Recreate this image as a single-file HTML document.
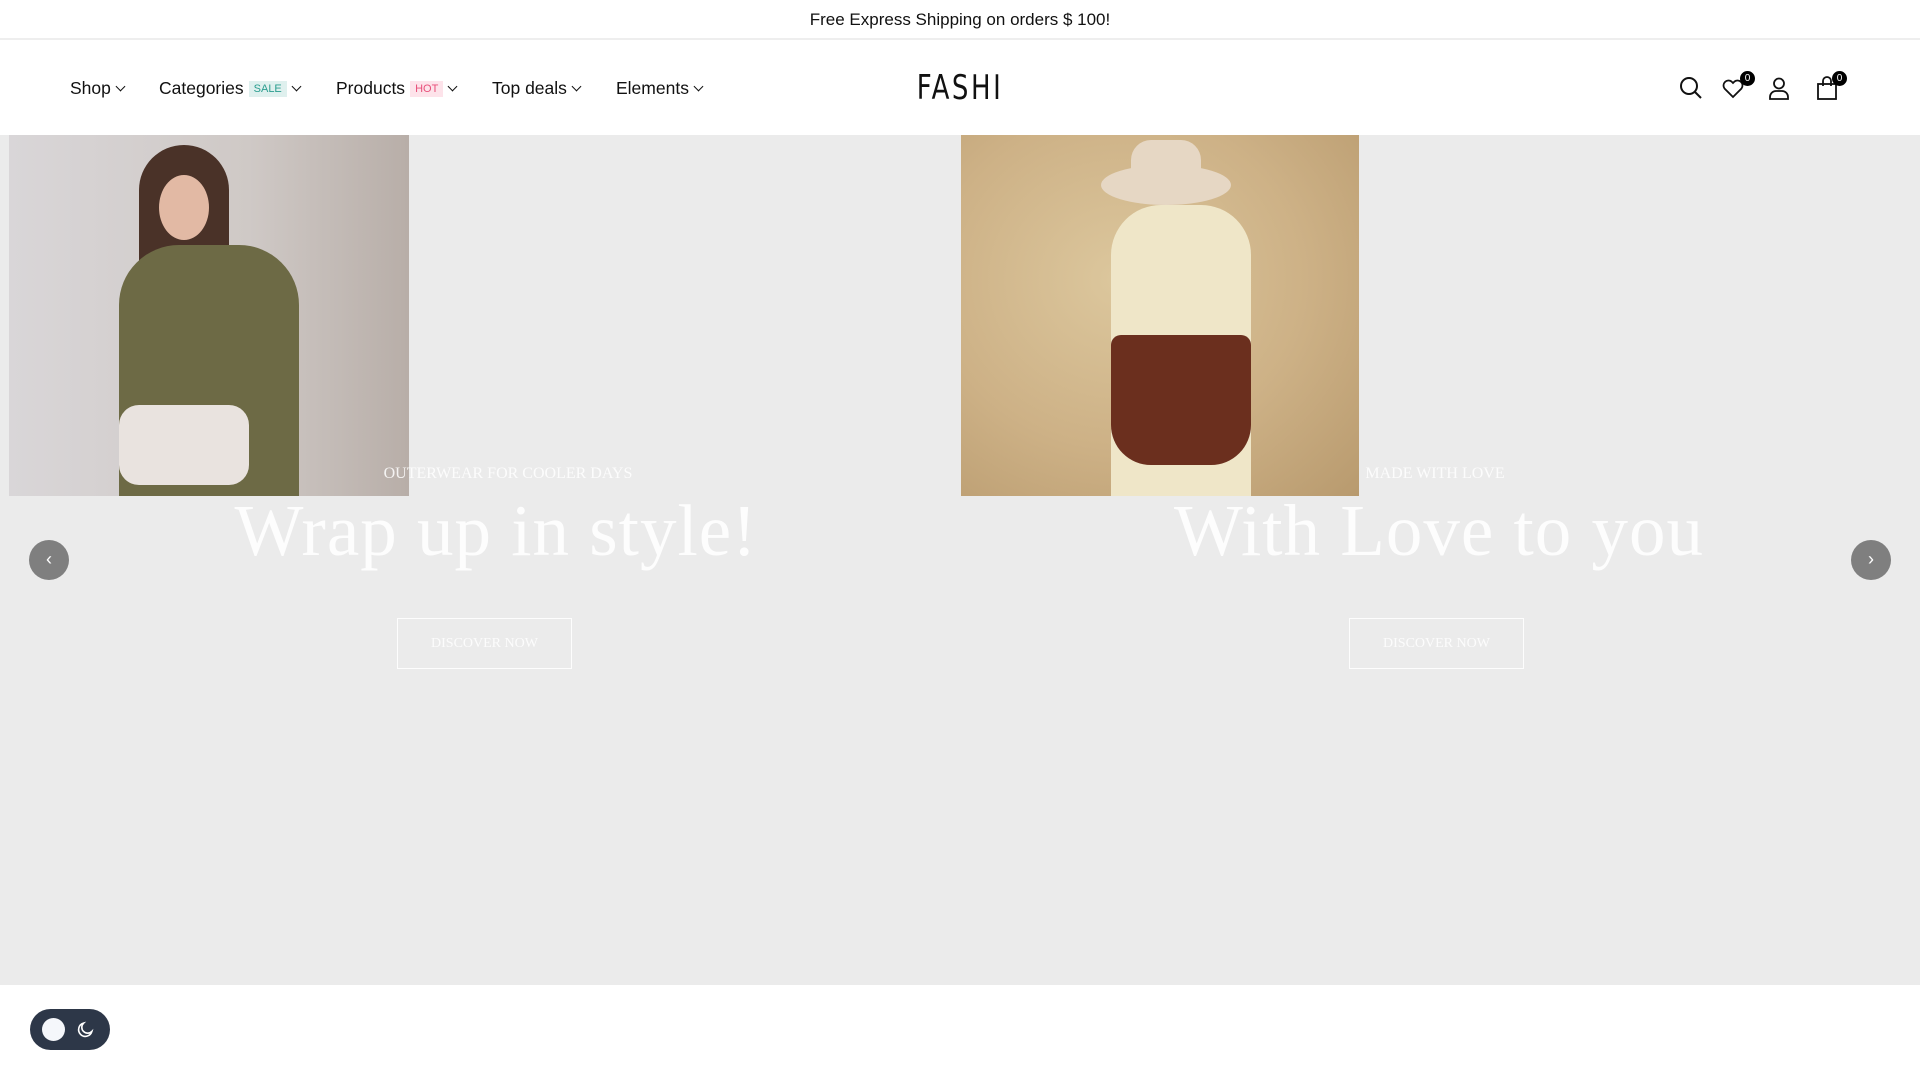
<!DOCTYPE html>
<html><head><meta charset="utf-8"><style>
*{margin:0;padding:0;box-sizing:border-box}
body{width:1920px;height:1080px;overflow:hidden;background:#fff;font-family:"Liberation Sans",sans-serif;position:relative}
.top{height:40px;border-bottom:2px solid #eee;text-align:center;font-size:17px;line-height:40px;color:#111}
.hdr{height:95px;position:relative}
.nav{position:absolute;top:0;left:0;height:95px;font-size:17.5px;color:#111}
.nav span.i{position:absolute;top:38px;white-space:nowrap}
.chev{display:inline-block;width:7px;height:7px;border-right:1.5px solid #111;border-bottom:1.5px solid #111;transform:rotate(45deg);margin-left:6px;position:relative;top:-4px}
.tag{font-size:11px;padding:2px 5px;margin-left:5px;position:relative;top:-2px}
.logo{position:absolute;left:0;width:1920px;text-align:center;top:28px;font-family:"Liberation Sans Narrow","DejaVu Sans Condensed",sans-serif;font-size:34px;letter-spacing:3px;color:#111;transform:scaleX(.85)}
.ic{position:absolute}
.badge{position:absolute;width:15px;height:15px;border-radius:50%;background:#000;color:#fff;font-size:10px;text-align:center;line-height:15px}
.hero{position:absolute;top:135px;left:0;width:1920px;height:850px;background:#ebebeb;overflow:hidden}
.img1{position:absolute;left:9px;top:0;width:400px;height:361px;overflow:hidden;background:linear-gradient(90deg,#d9d6d8 0%,#cfc9c6 60%,#b8aea8 100%)}
.img2{position:absolute;left:961px;top:0;width:398px;height:361px;overflow:hidden;background:radial-gradient(ellipse at 40% 40%,#dcc79d 0%,#cdb186 55%,#b89a6e 100%)}
.sub{position:absolute;font-family:"Liberation Serif",serif;color:rgba(255,255,255,.85);font-size:16px;transform:translateX(-50%);white-space:nowrap}
.h{position:absolute;font-family:"Liberation Serif",serif;color:rgba(255,255,255,.9);font-size:73px;transform:translateX(-50%);white-space:nowrap;letter-spacing:1px}
.btn{position:absolute;border:1.5px solid rgba(255,255,255,.9);width:175px;height:51px;color:rgba(255,255,255,.85);font-family:"Liberation Serif",serif;font-size:14px;text-align:center;line-height:49px}
.arr{position:absolute;top:540px;width:40px;height:40px;border-radius:50%;background:#7f7f7f;color:#fff;text-align:center;line-height:38px;font-size:18px}
.tog{position:absolute;left:30px;top:1009px;width:80px;height:41px;border-radius:21px;background:#2d3748}
</style></head><body>
<div class="top">Free Express Shipping on orders $ 100!</div>
<div class="hdr">
<div class="nav">
<span class="i" style="left:70px">Shop<i class="chev"></i></span>
<span class="i" style="left:159px">Categories<span class="tag" style="background:#dff0ee;color:#2a9d8f">SALE</span><i class="chev"></i></span>
<span class="i" style="left:336px">Products<span class="tag" style="background:#fde3ea;color:#e84f7a">HOT</span><i class="chev"></i></span>
<span class="i" style="left:492px">Top deals<i class="chev"></i></span>
<span class="i" style="left:616px">Elements<i class="chev"></i></span>
</div>
<div class="logo">FASHI</div>
<svg class="ic" style="left:1679px;top:36px" width="24" height="24" viewBox="0 0 24 24" fill="none" stroke="#111" stroke-width="2"><circle cx="10" cy="10" r="8"/><path d="M16 16l6 6"/></svg>
<svg class="ic" style="left:1721px;top:36px" width="24" height="24" viewBox="0 0 24 24" fill="none" stroke="#111" stroke-width="1.8"><path d="M12 21l-8.5-8.5a5 5 0 017-7L12 7l1.5-1.5a5 5 0 017 7z"/></svg>
<div class="badge" style="left:1740px;top:31px">0</div>
<svg class="ic" style="left:1767px;top:36px" width="24" height="24" viewBox="0 0 24 24" fill="none" stroke="#111" stroke-width="1.8"><circle cx="12" cy="7.5" r="5"/><path d="M3 23v-2a6 6 0 016-6h6a6 6 0 016 6v2z"/></svg>
<svg class="ic" style="left:1816px;top:36px" width="22" height="24" viewBox="0 0 22 24" fill="none" stroke="#111" stroke-width="1.8"><rect x="2" y="8" width="18" height="15"/><path d="M7 10V5a4 4 0 018 0v5"/></svg>
<div class="badge" style="left:1832px;top:31px">0</div>
</div>
<div class="hero">
<div class="img1">
<div style="position:absolute;left:130px;top:10px;width:90px;height:140px;border-radius:45px 45px 20px 20px;background:#4a3228"></div>
<div style="position:absolute;left:150px;top:40px;width:50px;height:65px;border-radius:50%;background:#e2b9a4"></div>
<div style="position:absolute;left:110px;top:110px;width:180px;height:260px;border-radius:60px 60px 0 0;background:#6d6a45"></div>
<div style="position:absolute;left:110px;top:270px;width:130px;height:80px;border-radius:20px;background:#e9e3df"></div>
</div>
<div class="img2">
<div style="position:absolute;left:140px;top:30px;width:130px;height:40px;border-radius:50%;background:#e6d7c4"></div>
<div style="position:absolute;left:170px;top:5px;width:70px;height:45px;border-radius:20px 20px 0 0;background:#e6d7c4"></div>
<div style="position:absolute;left:150px;top:70px;width:140px;height:291px;border-radius:50px 50px 0 0;background:#efe6c8"></div>
<div style="position:absolute;left:150px;top:200px;width:140px;height:130px;border-radius:10px 10px 40px 40px;background:#6b2f1e"></div>
</div>
<div class="sub" style="left:508px;top:330px">OUTERWEAR FOR COOLER DAYS</div>
<div class="h" style="left:496px;top:354px">Wrap up in style!</div>
<div class="btn" style="left:397px;top:483px">DISCOVER NOW</div>
<div class="sub" style="left:1435px;top:330px">MADE WITH LOVE</div>
<div class="h" style="left:1439px;top:354px">With Love to you</div>
<div class="btn" style="left:1349px;top:483px">DISCOVER NOW</div>
</div>
<div class="arr" style="left:29px">&#8249;</div>
<div class="arr" style="left:1851px">&#8250;</div>
<div class="tog">
<div style="position:absolute;left:12px;top:9px;width:23px;height:23px;border-radius:50%;background:#f5f7fb"></div>
<svg style="position:absolute;left:46px;top:11px" width="19" height="19" viewBox="0 0 24 24" fill="none" stroke="#fff" stroke-width="2"><path d="M20 14.5A8.5 8.5 0 119.5 4a7 7 0 0010.5 10.5z"/></svg>
</div>
</body></html>
